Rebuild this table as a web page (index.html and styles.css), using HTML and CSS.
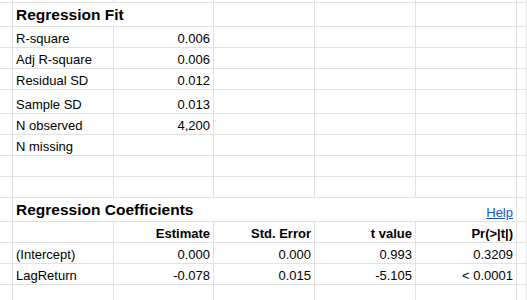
FILE: index.html
```html
<!DOCTYPE html>
<html>
<head>
<meta charset="utf-8">
<link rel="stylesheet" href="styles.css">
</head>
<body>
<div class="sheet">
  <!-- row 0 (partial) -->
  <div class="c r0"></div><div class="c r0"></div><div class="c r0"></div><div class="c r0"></div><div class="c r0"></div><div class="c r0"></div><div class="c r0"></div>

  <!-- row 1 -->
  <div class="c"></div><div class="c title span2">Regression Fit</div><div class="c"></div><div class="c"></div><div class="c"></div><div class="c"></div>

  <div class="c"></div><div class="c">R-square</div><div class="c num">0.006</div><div class="c"></div><div class="c"></div><div class="c"></div><div class="c"></div>
  <div class="c"></div><div class="c">Adj R-square</div><div class="c num">0.006</div><div class="c"></div><div class="c"></div><div class="c"></div><div class="c"></div>
  <div class="c"></div><div class="c">Residual SD</div><div class="c num">0.012</div><div class="c"></div><div class="c"></div><div class="c"></div><div class="c"></div>
  <div class="c"></div><div class="c">Sample SD</div><div class="c num">0.013</div><div class="c"></div><div class="c"></div><div class="c"></div><div class="c"></div>
  <div class="c"></div><div class="c">N observed</div><div class="c num">4,200</div><div class="c"></div><div class="c"></div><div class="c"></div><div class="c"></div>
  <div class="c"></div><div class="c">N missing</div><div class="c num"></div><div class="c"></div><div class="c"></div><div class="c"></div><div class="c"></div>
  <div class="c"></div><div class="c"></div><div class="c"></div><div class="c"></div><div class="c"></div><div class="c"></div><div class="c"></div>
  <div class="c"></div><div class="c"></div><div class="c"></div><div class="c"></div><div class="c"></div><div class="c"></div><div class="c"></div>

  <!-- coefficients title -->
  <div class="c"></div>
  <div class="c span5 titlebar"><span class="title-text">Regression Coefficients</span><a class="help" href="#">Help</a></div>
  <div class="c"></div>

  <div class="c"></div><div class="c"></div><div class="c num hd">Estimate</div><div class="c num hd">Std. Error</div><div class="c num hd">t value</div><div class="c num hd">Pr(&gt;|t|)</div><div class="c"></div>
  <div class="c"></div><div class="c">(Intercept)</div><div class="c num">0.000</div><div class="c num">0.000</div><div class="c num">0.993</div><div class="c num">0.3209</div><div class="c"></div>
  <div class="c"></div><div class="c">LagReturn</div><div class="c num">-0.078</div><div class="c num">0.015</div><div class="c num">-5.105</div><div class="c num">&lt; 0.0001</div><div class="c"></div>
  <div class="c"></div><div class="c"></div><div class="c"></div><div class="c"></div><div class="c"></div><div class="c"></div><div class="c"></div>
</div>
</body>
</html>
```

FILE: styles.css
```css
html, body {
  margin: 0;
  padding: 0;
  background: #ffffff;
}

body {
  font-family: "Liberation Sans", Arial, sans-serif;
  font-size: 13px;
  color: #000000;
  overflow: hidden;
}

.sheet {
  display: grid;
  grid-template-columns: 13px 101px 100px 101px 101px 101px 10px;
  grid-template-rows: 3px 24px 21px 21px 21px 24px 21px 21px 21px 21px 24px 21px 21px 21px 21px;
  width: 527px;
}

.c {
  box-sizing: border-box;
  border-right: 1px solid #e2e2e2;
  border-bottom: 1px solid #e2e2e2;
  display: flex;
  align-items: flex-end;
  padding: 0 3px 1px 3px;
  white-space: nowrap;
  overflow: hidden;
  line-height: 15px;
}

.r0 {
  padding: 0;
}

.span2 {
  grid-column: span 2;
}

.span5 {
  grid-column: span 5;
}

.title,
.title-text {
  font-weight: bold;
  font-size: 15.5px;
  line-height: 18px;
}

.title {
  padding-bottom: 2px;
}

.titlebar {
  justify-content: space-between;
  padding-bottom: 1px;
}

.title-text {
  padding-bottom: 1px;
}

.num {
  justify-content: flex-end;
}

.hd {
  font-weight: bold;
}

.help {
  color: #1155cc;
  text-decoration: underline;
}
```
